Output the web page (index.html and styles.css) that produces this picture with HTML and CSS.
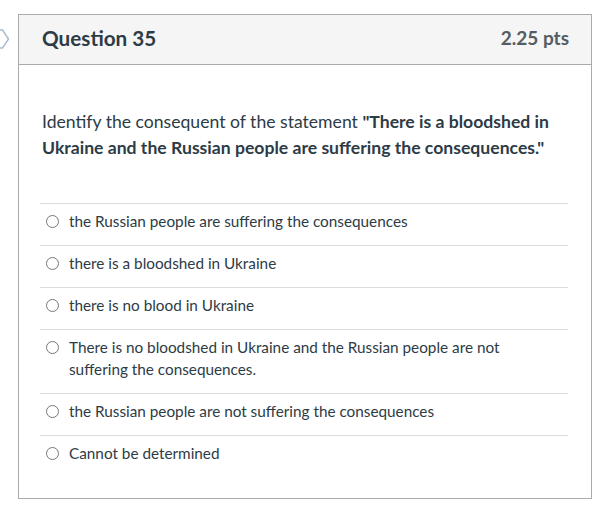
FILE: index.html
```html
<!DOCTYPE html>
<html lang="en">
<head>
<meta charset="utf-8">
<title>Question 35</title>
<link rel="stylesheet" href="styles.css">
</head>
<body>
<div class="page">
  <svg class="flag" width="10" height="20" viewBox="0 0 10 20" aria-hidden="true">
    <polyline points="-4,1 2.5,1 8.5,10 2.5,19 -4,19" fill="none" stroke="#a9bdd1" stroke-width="1.4" stroke-linejoin="round"/>
  </svg>
  <div class="question">
    <div class="q-header">
      <h2 class="q-title">Question 35</h2>
      <span class="q-points">2.25 pts</span>
    </div>
    <div class="q-body">
      <p class="q-text">Identify the consequent of the statement <strong>"There is a bloodshed in Ukraine and the Russian people are suffering the consequences."</strong></p>
      <div class="answers">
        <label class="answer"><span class="radio"></span><span class="answer-text">the Russian people are suffering the consequences</span></label>
        <label class="answer"><span class="radio"></span><span class="answer-text">there is a bloodshed in Ukraine</span></label>
        <label class="answer"><span class="radio"></span><span class="answer-text">there is no blood in Ukraine</span></label>
        <label class="answer"><span class="radio"></span><span class="answer-text">There is no bloodshed in Ukraine and the Russian people are not suffering the consequences.</span></label>
        <label class="answer"><span class="radio"></span><span class="answer-text">the Russian people are not suffering the consequences</span></label>
        <label class="answer last"><span class="radio"></span><span class="answer-text">Cannot be determined</span></label>
      </div>
    </div>
  </div>
</div>
</body>
</html>
```
FILE: styles.css
```css
* { box-sizing: border-box; }
html, body { margin: 0; padding: 0; background: #fff; }
body {
  font-family: Lato, "Open Sans", "Liberation Sans", sans-serif;
  color: #2d3b45;
}
.page {
  display: flex;
  align-items: flex-start;
  padding-top: 14px;
}
.flag {
  flex: none;
  margin-top: 15px;
  margin-right: 8px;
}
.question {
  flex: none;
  width: 574px;
  border: 1px solid #aaaaaa;
}
.q-header {
  display: flex;
  align-items: center;
  justify-content: space-between;
  height: 50px;
  padding: 0 22px 4px 23px;
  background: #f5f5f5;
  border-bottom: 1px solid #aaaaaa;
}
.q-title {
  margin: 0;
  font-size: 20.7px;
  line-height: 26px;
  font-weight: 700;
  color: #2d3b45;
}
.q-points {
  font-size: 19px;
  line-height: 26px;
  font-weight: 700;
  color: #555c62;
}
.q-body {
  padding: 44px 23px 21px 23px;
}
.q-text {
  margin: 0 0 42px 0;
  font-size: 17.6px;
  line-height: 26px;
  color: #2d3b45;
}
.q-text strong { font-weight: 700; }
.answers {
  display: flex;
  flex-direction: column;
  margin: 0 0 0 -2px;
}
.answer {
  display: flex;
  align-items: flex-start;
  border-top: 1px solid #dcdcdc;
  padding: 6px 0 13px 6px;
  font-size: 15.3px;
  line-height: 22px;
}
.radio {
  flex: none;
  width: 13px;
  height: 13px;
  margin-top: 5px;
  margin-right: 10px;
  border: 1px solid #777;
  border-radius: 50%;
  background: #fff;
}
.answer-text { padding-right: 40px; }
```
